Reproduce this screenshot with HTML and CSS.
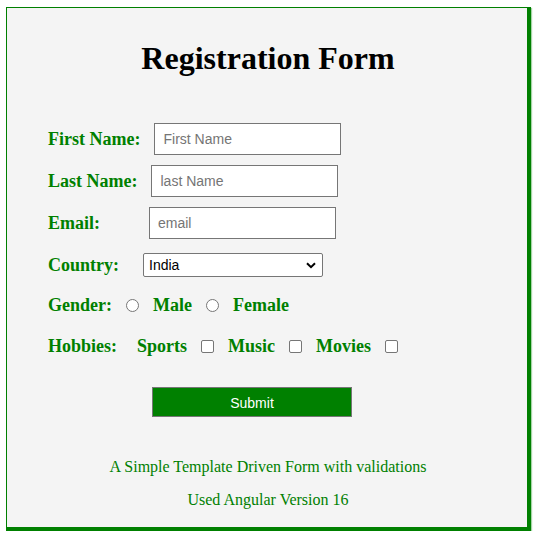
FILE: index.html
```html
<!DOCTYPE html>
<html>
<head>
<meta charset="utf-8">
<link rel="stylesheet" href="styles.css">
</head>
<body>
<div class="card">
  <h1 class="title">Registration Form</h1>
  <form class="form">
    <div class="row">
      <label class="lbl">First Name:</label>
      <input class="txt" type="text" placeholder="First Name">
    </div>
    <div class="row">
      <label class="lbl">Last Name:</label>
      <input class="txt" type="text" placeholder="last Name">
    </div>
    <div class="row">
      <label class="lbl lbl-email">Email:</label>
      <input class="txt" type="text" placeholder="email">
    </div>
    <div class="row">
      <label class="lbl lbl-country">Country:</label>
      <span class="sel-wrap">
        <select class="sel">
          <option>India</option>
          <option>USA</option>
          <option>UK</option>
        </select>
        <svg class="chev" width="10" height="7" viewBox="0 0 10 7"><path d="M1 1.2 L5 5.2 L9 1.2" fill="none" stroke="#000" stroke-width="2"/></svg>
      </span>
    </div>
    <div class="row row-choice row-gender">
      <span class="lbl">Gender:</span>
      <input class="radio" type="radio" name="g">
      <span class="lbl">Male</span>
      <input class="radio" type="radio" name="g">
      <span class="lbl">Female</span>
    </div>
    <div class="row row-choice row-hobbies">
      <span class="lbl lbl-hobbies">Hobbies:</span>
      <span class="lbl">Sports</span>
      <input class="check" type="checkbox">
      <span class="lbl">Music</span>
      <input class="check" type="checkbox">
      <span class="lbl">Movies</span>
      <input class="check" type="checkbox">
    </div>
    <div class="actions">
      <button class="submit" type="button">Submit</button>
    </div>
  </form>
  <p class="note note-first">A Simple Template Driven Form with validations</p>
  <p class="note">Used Angular Version 16</p>
</div>
</body>
</html>
```

FILE: styles.css
```css
html, body {
  margin: 0;
  padding: 0;
  background: #ffffff;
}

.card {
  margin: 7px 0 0 6px;
  width: 525px;
  height: 524px;
  box-sizing: border-box;
  border-style: solid;
  border-color: #008000;
  border-width: 1px 4px 4px 1px;
  box-shadow: 1px 1px 1px rgba(0, 128, 0, 0.35);
  background: #f4f4f4;
  padding: 0 39px 0 41px;
  font-family: "Liberation Serif", "Times New Roman", serif;
}

.title {
  margin: 32px 0 0;
  font-size: 32px;
  line-height: 37px;
  font-weight: bold;
  text-align: center;
  color: #000;
}

.form {
  display: flex;
  flex-direction: column;
  margin-top: 46px;
}

.row {
  display: flex;
  align-items: center;
  height: 32px;
  margin-bottom: 10px;
}

.lbl {
  font-size: 18px;
  font-weight: bold;
  color: #008000;
  margin-right: 14px;
  white-space: nowrap;
}

.lbl-email { margin-right: 49px; }
.lbl-country { margin-right: 24px; }

.txt {
  width: 187px;
  height: 32px;
  box-sizing: border-box;
  border: 1px solid #767676;
  background: #fff;
  padding: 0 8px;
  margin: 0;
  font-family: "Liberation Sans", Arial, sans-serif;
  font-size: 14px;
  color: #000;
}

.txt::placeholder {
  color: #757575;
}

.sel-wrap {
  position: relative;
  display: inline-flex;
}

.sel {
  appearance: none;
  -webkit-appearance: none;
  width: 180px;
  height: 24px;
  box-sizing: border-box;
  margin: 0;
  border: 1px solid #767676;
  border-radius: 2px;
  background: #fff;
  font-family: "Liberation Sans", Arial, sans-serif;
  font-size: 14px;
  color: #000;
  padding: 0 0 0 5px;
}

.chev {
  position: absolute;
  right: 7px;
  top: 9px;
  pointer-events: none;
}

.row-choice {
  gap: 14px;
}

.row-choice .lbl {
  margin-right: 0;
}

.row-gender {
  margin-top: -2px;
}

.row-hobbies {
  margin-top: -1px;
  gap: 14px;
}

.row-hobbies .lbl-hobbies {
  margin-right: 6px;
}

.radio, .check {
  appearance: none;
  -webkit-appearance: none;
  width: 13px;
  height: 13px;
  margin: 0;
  box-sizing: border-box;
  border: 1px solid #767676;
  background: #fff;
  flex: none;
}

.radio {
  border-radius: 50%;
}

.check {
  border-radius: 2px;
}

.actions {
  margin-top: 15px;
  padding-left: 104px;
}

.submit {
  width: 200px;
  height: 30px;
  box-sizing: border-box;
  background: #008000;
  border: 1px solid #767676;
  color: #fff;
  font-family: "Liberation Sans", Arial, sans-serif;
  font-size: 14px;
  margin: 0;
  padding: 2px 0 0;
}

.note {
  margin: 0;
  text-align: center;
  font-size: 16px;
  line-height: 18px;
  color: #008000;
}

.note-first {
  margin-top: 41px;
  margin-bottom: 15px;
}
```
